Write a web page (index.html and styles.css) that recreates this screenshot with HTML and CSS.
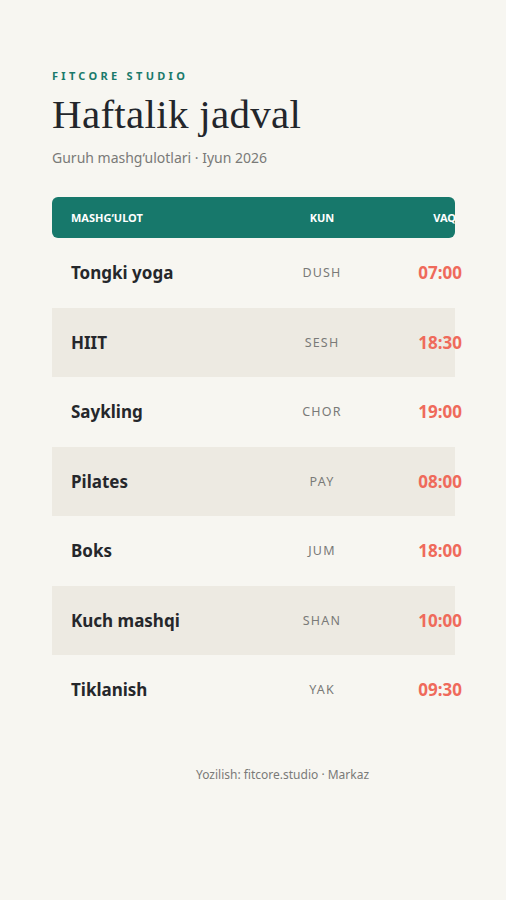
FILE: index.html
```html
<!DOCTYPE html>
<html lang="uz">
<head>
<meta charset="utf-8">
<link rel="stylesheet" href="styles.css">
</head>
<body>
<main class="page">
  <div class="brand">FITCORE STUDIO</div>
  <h1 class="title">Haftalik jadval</h1>
  <p class="subtitle">Guruh mashg‘ulotlari · Iyun 2026</p>

  <section class="table">
    <div class="head">
      <div class="grid">
        <span class="c-name">MASHG‘ULOT</span>
        <span class="c-day">KUN</span>
        <span class="c-time">VAQT</span>
      </div>
    </div>
    <div class="row"><div class="grid"><span class="c-name name">Tongki yoga</span><span class="c-day day">DUSH</span><span class="c-time time">07:00</span></div></div>
    <div class="row alt"><div class="grid"><span class="c-name name">HIIT</span><span class="c-day day">SESH</span><span class="c-time time">18:30</span></div></div>
    <div class="row"><div class="grid"><span class="c-name name">Saykling</span><span class="c-day day">CHOR</span><span class="c-time time">19:00</span></div></div>
    <div class="row alt"><div class="grid"><span class="c-name name">Pilates</span><span class="c-day day">PAY</span><span class="c-time time">08:00</span></div></div>
    <div class="row"><div class="grid"><span class="c-name name">Boks</span><span class="c-day day">JUM</span><span class="c-time time">18:00</span></div></div>
    <div class="row alt"><div class="grid"><span class="c-name name">Kuch mashqi</span><span class="c-day day">SHAN</span><span class="c-time time">10:00</span></div></div>
    <div class="row"><div class="grid"><span class="c-name name">Tiklanish</span><span class="c-day day">YAK</span><span class="c-time time">09:30</span></div></div>
  </section>

  <footer class="footer">Yozilish: fitcore.studio · Markaz</footer>
</main>
</body>
</html>
```
FILE: styles.css
```css
* { box-sizing: border-box; }
html, body { margin: 0; padding: 0; }
body {
  background: #f7f6f1;
  font-family: "Noto Sans", "Open Sans", sans-serif;
  color: #222;
  width: 506px;
  height: 900px;
  overflow: hidden;
}
.page {
  padding: 69px 51px 0 52px;
}
.brand {
  font-size: 11px;
  font-weight: 700;
  letter-spacing: 3.3px;
  color: #1a7a6b;
  line-height: 14px;
}
.title {
  margin: 7px 0 0;
  font-family: "Liberation Serif", "Times New Roman", serif;
  font-weight: 400;
  font-size: 41px;
  line-height: 48px;
  color: #23262b;
  letter-spacing: 0.3px;
}
.subtitle {
  margin: 10px 0 0;
  font-size: 14px;
  line-height: 20px;
  color: #7a7a78;
}
.table {
  margin-top: 29px;
  width: 403px;
}
.grid {
  display: grid;
  grid-template-columns: 200px 102px 89px;
  align-items: center;
  padding: 0 19px;
  height: 100%;
}
.head {
  height: 41px;
  background: #17786b;
  border-radius: 6px;
  overflow: hidden;
  color: #fff;
  font-size: 11px;
  font-weight: 700;
}
.c-day { text-align: center; }
.c-time { text-align: right; }
.row {
  height: 69.5px;
}
.row.alt { background: #edeae2; }
.name {
  font-size: 17px;
  font-weight: 700;
  color: #25272b;
}
.day {
  font-size: 12.5px;
  letter-spacing: 1.2px;
  color: #7a7a78;
}
.time {
  font-size: 17px;
  font-weight: 700;
  color: #ef6a5b;
}
.footer {
  margin-top: 41px;
  padding-left: 144px;
  font-size: 12px;
  line-height: 18px;
  color: #7a7a78;
}
```
